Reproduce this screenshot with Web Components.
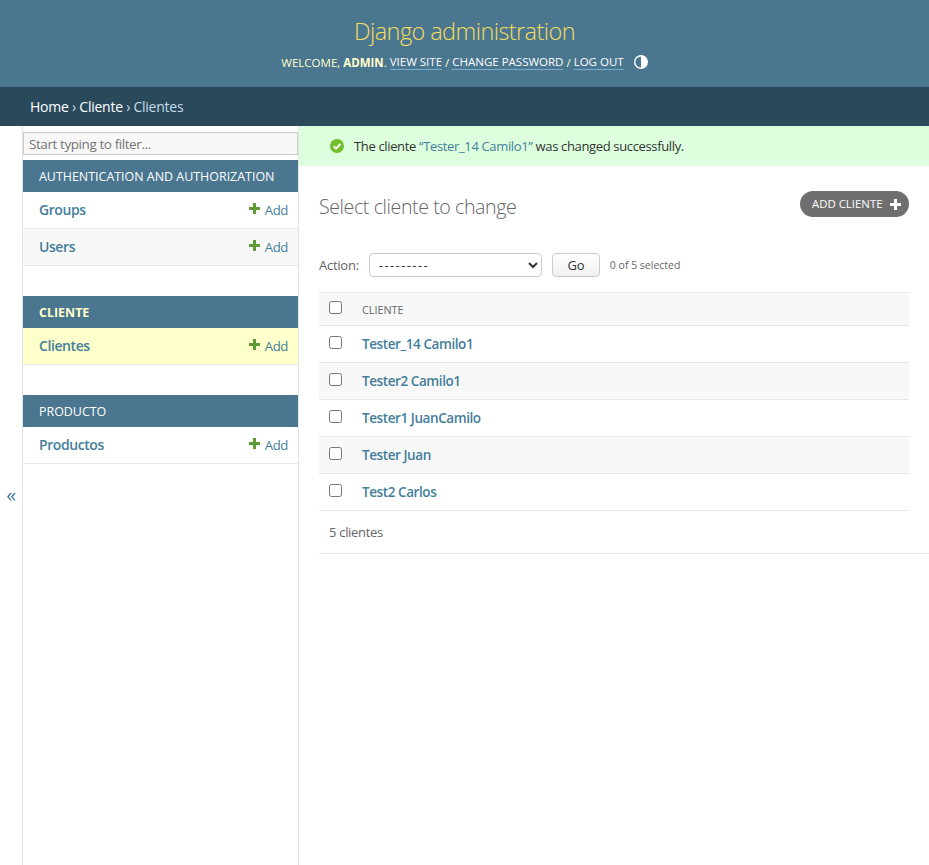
<!DOCTYPE html>
<html lang="en">
<head>
<meta charset="utf-8">
<title>Select cliente to change</title>
<style>
  html, body { margin: 0; height: 100%; }
  body {
    font-family: "Open Sans", "Noto Sans", sans-serif;
    font-size: 14px;
    color: #333;
    background: #fff;
    letter-spacing: -0.03em;
  }
  admin-page { height: 865px; overflow: hidden; }
</style>
</head>
<body>
<admin-page>
  <admin-header slot="header"></admin-header>
  <admin-crumbs slot="header"></admin-crumbs>
  <admin-sidebar slot="side">
    <app-module caption="Authentication and Authorization">
      <model-row name="Groups"></model-row>
      <model-row name="Users" alt></model-row>
    </app-module>
    <app-module caption="Cliente" current>
      <model-row name="Clientes" current></model-row>
    </app-module>
    <app-module caption="Producto">
      <model-row name="Productos"></model-row>
    </app-module>
  </admin-sidebar>
  <message-bar>The cliente <a>“Tester_14 Camilo1”</a> was changed successfully.</message-bar>
  <change-list title-text="Select cliente to change">
    <result-row name="Tester_14 Camilo1"></result-row>
    <result-row name="Tester2 Camilo1" alt></result-row>
    <result-row name="Tester1 JuanCamilo"></result-row>
    <result-row name="Tester Juan" alt></result-row>
    <result-row name="Test2 Carlos"></result-row>
  </change-list>
</admin-page>

<script>
const PLUS = `<svg width="11" height="11" viewBox="0 0 10 10"><path d="M3.6 0h2.8v3.6H10v2.8H6.4V10H3.6V6.4H0V3.6h3.6z" fill="currentColor"/></svg>`;

class AdminPage extends HTMLElement {
  constructor() {
    super();
    this.attachShadow({ mode: "open" });
    this.shadowRoot.innerHTML = `
      <style>
        :host { display: flex; flex-direction: column; }
        .body { flex: 1; display: flex; min-height: 0; }
        .toggle {
          width: 22px;
          border-right: 1px solid #e4e4e4;
          display: flex;
          align-items: center;
          justify-content: center;
          color: #447e9b;
          font-size: 20px;
          flex: none;
        }
        .toggle span { position: relative; top: -1px; }
        .main { flex: 1; min-width: 0; }
      </style>
      <slot name="header"></slot>
      <div class="body">
        <div class="toggle"><span>«</span></div>
        <slot name="side"></slot>
        <div class="main"><slot></slot></div>
      </div>`;
  }
}

class AdminHeader extends HTMLElement {
  constructor() {
    super();
    this.attachShadow({ mode: "open" });
    this.shadowRoot.innerHTML = `
      <style>
        :host {
          display: flex;
          flex-direction: column;
          align-items: center;
          height: 87px;
          box-sizing: border-box;
          padding-top: 15px;
          background: #4a768f;
          color: #f5f5dc;
        }
        .brand { font-size: 23.5px; font-weight: 300; line-height: 32px; color: #f5dd5d; letter-spacing: -0.025em; }
        .tools {
          display: flex;
          align-items: center;
          margin-top: 6px;
          height: 18px;
          font-size: 11.5px;
          color: #ffc;
          text-transform: uppercase;
          letter-spacing: 0;
          white-space: pre;
        }
        b { font-weight: 700; }
        a { color: #fff; border-bottom: 1px solid #79aec8; line-height: 14px; }
        svg { margin-left: 10px; }
      </style>
      <div class="brand">Django administration</div>
      <div class="tools">Welcome, <b>admin</b>. <a>View site</a> / <a>Change password</a> / <a>Log out</a>
        <svg width="14" height="14" viewBox="0 0 14 14"><circle cx="7" cy="7" r="6.3" fill="none" stroke="#fff" stroke-width="1.4"/><path d="M7 .7a6.3 6.3 0 0 1 0 12.6z" fill="#fff"/></svg>
      </div>`;
  }
}

class AdminCrumbs extends HTMLElement {
  constructor() {
    super();
    this.attachShadow({ mode: "open" });
    this.shadowRoot.innerHTML = `
      <style>
        :host {
          display: flex;
          align-items: center;
          height: 39px;
          padding-left: 30px;
          background: #2a4a5c;
          color: #c4dce8;
          font-size: 14px;
          letter-spacing: -0.25px;
          white-space: pre;
        }
        a { color: #fff; }
      </style>
      <a>Home</a> › <a>Cliente</a> › Clientes`;
  }
}

class AdminSidebar extends HTMLElement {
  constructor() {
    super();
    this.attachShadow({ mode: "open" });
    this.shadowRoot.innerHTML = `
      <style>
        :host {
          display: block;
          flex: none;
          width: 275px;
          border-right: 1px solid #e4e4e4;
          border-left: 1px solid #e4e4e4;
          margin-left: -1px;
        }
        input {
          display: block;
          box-sizing: border-box;
          width: 100%;
          height: 23px;
          margin: 6px 0 5px;
          padding: 0 5px;
          border: 1px solid #ccc;
          background: #f8f8f8;
          font: inherit;
          font-size: 13.5px;
          letter-spacing: inherit;
          color: #333;
        }
        input::placeholder { color: #757575; opacity: 1; }
      </style>
      <input placeholder="Start typing to filter...">
      <slot></slot>`;
  }
}

class AppModule extends HTMLElement {
  constructor() {
    super();
    this.attachShadow({ mode: "open" });
    const current = this.hasAttribute("current");
    this.shadowRoot.innerHTML = `
      <style>
        :host { display: block; margin-bottom: 30px; }
        .cap {
          box-sizing: border-box;
          height: 32px;
          padding: 0 16px;
          display: flex;
          align-items: center;
          background: #4a768f;
          color: ${current ? "#ffc" : "#fff"};
          font-size: 12.45px;
          font-weight: ${current ? 700 : 400};
          text-transform: uppercase;
          letter-spacing: 0;
          white-space: nowrap;
        }
      </style>
      <div class="cap">${this.getAttribute("caption")}</div>
      <slot></slot>`;
  }
}

class ModelRow extends HTMLElement {
  constructor() {
    super();
    this.attachShadow({ mode: "open" });
    this.shadowRoot.innerHTML = `
      <style>
        :host {
          display: flex;
          align-items: center;
          justify-content: space-between;
          box-sizing: border-box;
          height: 37px;
          padding: 0 10px 2px 16px;
          border-bottom: 1px solid #e8e8e8;
          background: #fff;
        }
        :host([alt]) { background: #f8f8f8; }
        :host([current]) { background: #ffc; }
        .name { color: #447e9b; font-weight: 600; font-size: 14px; }
        .add { display: flex; align-items: center; color: #447e9b; font-size: 13.2px; position: relative; top: 1px; }
        svg { color: #5e9a35; margin-right: 5px; position: relative; top: -2px; }
      </style>
      <span class="name">${this.getAttribute("name")}</span>
      <span class="add">${PLUS}Add</span>`;
  }
}

class MessageBar extends HTMLElement {
  constructor() {
    super();
    this.attachShadow({ mode: "open" });
    this.shadowRoot.innerHTML = `
      <style>
        :host {
          display: flex;
          align-items: center;
          height: 40px;
          padding-left: 31px;
          background: #dfd;
          color: #333;
          font-size: 13px;
          letter-spacing: -0.35px;
          white-space: pre;
        }
        svg { margin-right: 10px; flex: none; }
        ::slotted(a) { color: #447e9b; }
      </style>
      <svg width="14" height="14" viewBox="0 0 14 14"><circle cx="7" cy="7" r="7" fill="#70bf2b"/><path d="M3.6 7.2l2.4 2.4 4.4-4.6" fill="none" stroke="#fff" stroke-width="2"/></svg>
      <slot></slot>`;
  }
}

class ChangeList extends HTMLElement {
  constructor() {
    super();
    this.attachShadow({ mode: "open" });
    this.shadowRoot.innerHTML = `
      <style>
        :host { display: block; padding: 25px 0 0 20px; }
        .top {
          display: flex;
          align-items: center;
          justify-content: space-between;
          height: 30px;
          padding-right: 20px;
        }
        h1 { margin: 0; font-size: 19.6px; font-weight: 300; color: #666; }
        .addlink {
          display: flex;
          align-items: center;
          align-self: flex-start;
          box-sizing: border-box;
          width: 109px;
          height: 26px;
          padding: 0 0 2px 12px;
          border-radius: 13px;
          background: #6f6f6f;
          color: #fff;
          font-size: 11.4px;
          letter-spacing: 0;
          white-space: nowrap;
          text-transform: uppercase;
        }
        .addlink svg { margin-left: 7px; position: relative; top: 1px; }
        .actions {
          display: flex;
          align-items: center;
          height: 24px;
          margin: 32px 20px 15px 0;
          font-size: 13px;
          letter-spacing: -0.25px;
          color: #666;
        }
        select {
          width: 173px;
          height: 24px;
          margin-left: 10px;
          padding: 0 5px;
          border: 1px solid #ccc;
          border-radius: 4px;
          background: #fff;
          font: 400 13px "Open Sans", sans-serif;
          letter-spacing: 1.4px;
          color: #333;
        }
        button {
          box-sizing: border-box;
          width: 48px;
          height: 24px;
          margin: 0 10px;
          padding: 0;
          border: 1px solid #ccc;
          border-radius: 4px;
          background: linear-gradient(#fff, #f0f0f0);
          font: 400 13px "Open Sans", sans-serif;
          letter-spacing: -0.03em;
          color: #333;
        }
        .count { font-size: 10.5px; color: #666; letter-spacing: 0; }
        .rows { margin-right: 20px; }
        .head {
          display: flex;
          align-items: center;
          box-sizing: border-box;
          height: 34px;
          padding-left: 10px;
          background: #f8f8f8;
          border-top: 1px solid #e8e8e8;
          border-bottom: 1px solid #e8e8e8;
          font-size: 10.8px;
          color: #666;
          letter-spacing: 0;
          text-transform: uppercase;
        }
        input { margin: 0 20px 0 0; width: 13px; height: 13px; position: relative; top: -2px; }
        .paginator {
          display: flex;
          align-items: center;
          height: 42px;
          padding-left: 10px;
          border-bottom: 1px solid #e8e8e8;
          font-size: 13px;
          letter-spacing: -0.3px;
          color: #666;
        }
      </style>
      <div class="top">
        <h1>${this.getAttribute("title-text")}</h1>
        <a class="addlink">Add cliente ${PLUS.replace('fill="currentColor"', 'fill="#fff"')}</a>
      </div>
      <div class="actions">
        Action:
        <select><option>---------</option></select>
        <button>Go</button>
        <span class="count">0 of 5 selected</span>
      </div>
      <div class="rows">
        <div class="head"><input type="checkbox"><span>Cliente</span></div>
        <slot></slot>
      </div>
      <div class="paginator">5 clientes</div>`;
  }
}

class ResultRow extends HTMLElement {
  constructor() {
    super();
    this.attachShadow({ mode: "open" });
    this.shadowRoot.innerHTML = `
      <style>
        :host {
          display: flex;
          align-items: center;
          box-sizing: border-box;
          height: 37px;
          padding-left: 10px;
          border-bottom: 1px solid #e8e8e8;
          background: #fff;
        }
        :host([alt]) { background: #f8f8f8; }
        input { margin: 0 20px 0 0; width: 13px; height: 13px; position: relative; top: -2px; }
        a { color: #447e9b; font-weight: 600; font-size: 13.5px; }
      </style>
      <input type="checkbox"><a>${this.getAttribute("name")}</a>`;
  }
}

customElements.define("admin-page", AdminPage);
customElements.define("admin-header", AdminHeader);
customElements.define("admin-crumbs", AdminCrumbs);
customElements.define("admin-sidebar", AdminSidebar);
customElements.define("app-module", AppModule);
customElements.define("model-row", ModelRow);
customElements.define("message-bar", MessageBar);
customElements.define("change-list", ChangeList);
customElements.define("result-row", ResultRow);
</script>
</body>
</html>
